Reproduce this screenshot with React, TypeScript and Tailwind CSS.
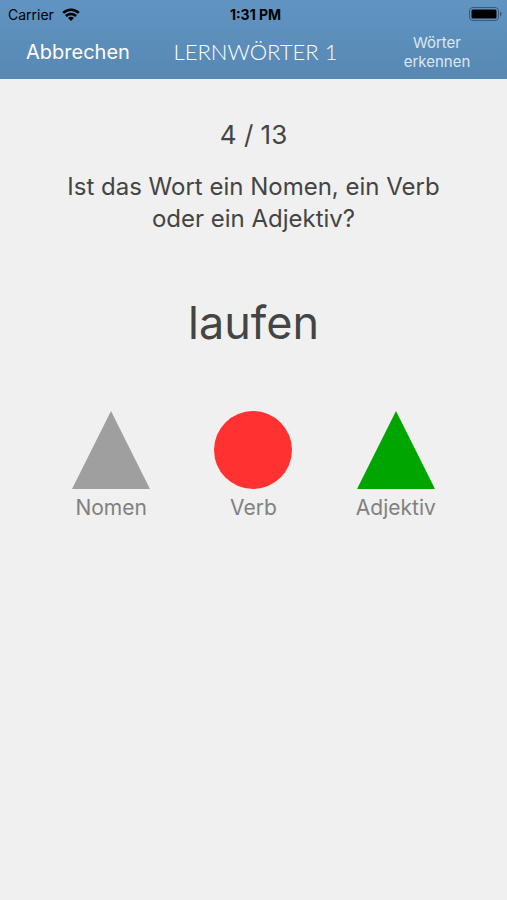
const StatusBar = () => {
    return (
        <div className="grid grid-cols-[1fr_auto_1fr] items-center h-7 pl-2 pr-1 text-black">
            <div className="flex items-center gap-2">
                <span className="text-[14px]">Carrier</span>
                <svg viewBox="0 0 18 13" className="w-[18px] h-[13px]" aria-hidden="true">
                    <g fill="none" stroke="currentColor" strokeWidth="2.5">
                        <path d="M1.2 4.9a11 11 0 0 1 15.6 0" />
                        <path d="M3.9 8a7.2 7.2 0 0 1 10.2 0" />
                    </g>
                    <path d="M9 13 6 10a4.2 4.2 0 0 1 6 0z" fill="currentColor" />
                </svg>
            </div>
            <span className="text-[14px] font-bold text-center">1:31 PM</span>
            <svg viewBox="0 0 34 14" className="w-[34px] h-[14px] justify-self-end" aria-hidden="true">
                <rect x="0.5" y="0.5" width="29" height="13" rx="3.5" fill="none" stroke="#34597c" />
                <rect x="2.5" y="2.5" width="25" height="9" rx="1.5" fill="currentColor" />
                <path d="M31 4.5c2 .8 2 4.2 0 5z" fill="#34597c" />
            </svg>
        </div>
    );
};

const Header = () => {
    return (
        <header className="bg-linear-to-b from-[#6194c1] to-[#5788b4]">
            <StatusBar />
            <div className="grid grid-cols-[1fr_auto_1fr] items-center h-[51px] pb-1 pl-[26px] pr-[22px]">
                <button type="button" className="justify-self-start text-[20px] text-white">
                    Abbrechen
                </button>
                <h1 className="font-['Lato'] font-light text-[22px] text-white">LERNWÖRTER 1</h1>
                <p className="justify-self-end w-24 text-center text-[15px] leading-[19px] text-[#dbe8f4]">
                    Wörter erkennen
                </p>
            </div>
        </header>
    );
};

const answers = [
    { label: "Nomen", shape: <path d="M39 0 78 78H0z" fill="#9f9f9f" /> },
    { label: "Verb", shape: <circle cx="39" cy="39" r="39" fill="#ff3131" /> },
    { label: "Adjektiv", shape: <path d="M39 0 78 78H0z" fill="#00a500" /> },
];

const App = () => {
    return (
        <div className="min-h-screen bg-[#f0f0f0] font-['Inter',sans-serif]">
            <Header />

            <main className="px-10 pt-9 text-center text-[#444444]">
                <p className="text-[26px] leading-10">4 / 13</p>
                <h2 className="mt-4 text-[24px] leading-8">
                    Ist das Wort ein Nomen, ein Verb <br />
                    oder ein Adjektiv?
                </h2>
                <p className="mt-14 text-[45px] leading-[64px]">laufen</p>

                {/* Answers */}
                <div className="mt-14 grid grid-cols-3">
                    {answers.map((answer) => (
                        <button
                            key={answer.label}
                            type="button"
                            className="flex flex-col items-center text-[21px] leading-[38px] text-[#808080]"
                        >
                            <svg viewBox="0 0 78 78" className="w-[78px] h-[78px]" aria-hidden="true">
                                {answer.shape}
                            </svg>
                            {answer.label}
                        </button>
                    ))}
                </div>
            </main>
        </div>
    );
};
export default App;
